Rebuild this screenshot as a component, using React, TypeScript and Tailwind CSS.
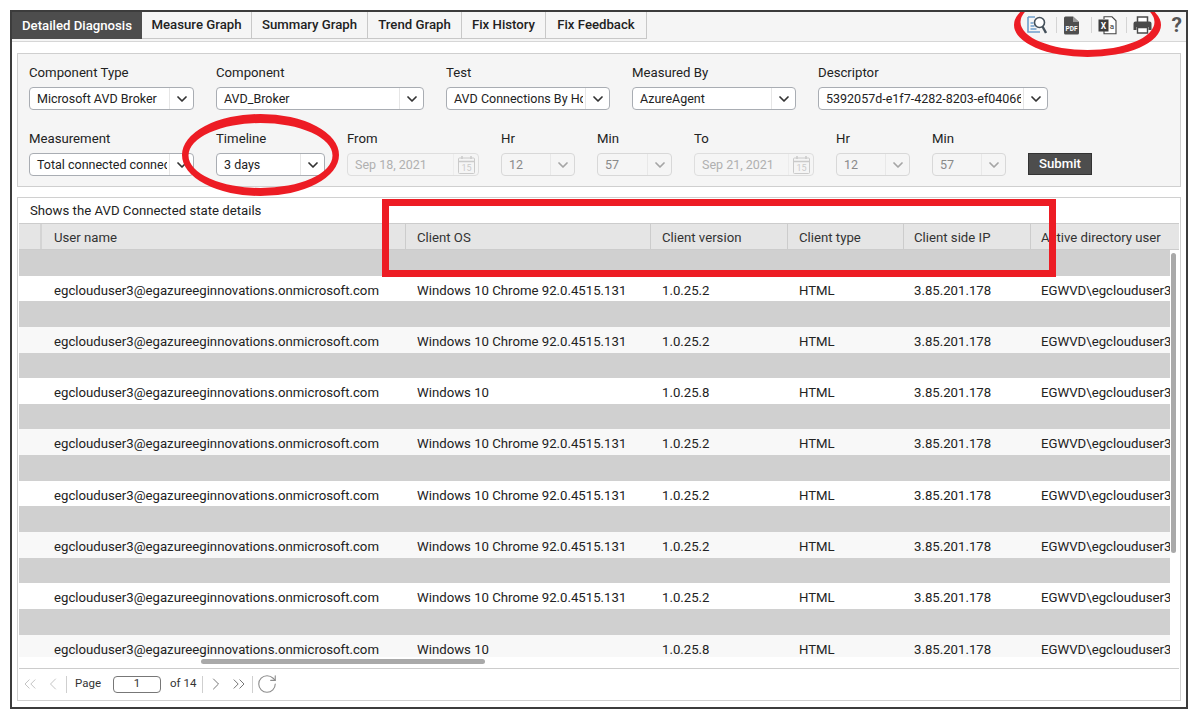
import { ChevronDown, ChevronLeft, ChevronRight, ChevronsLeft, ChevronsRight, RotateCw } from 'lucide-react';
import clsx from 'clsx';

const tabs = [
  { label: 'Measure Graph', width: 'w-[110px]' },
  { label: 'Summary Graph', width: 'w-[116px]' },
  { label: 'Trend Graph', width: 'w-[94px]' },
  { label: 'Fix History', width: 'w-[84px]' },
  { label: 'Fix Feedback', width: 'w-[101px]' },
];

const rows = [
  ['Windows 10 Chrome 92.0.4515.131', '1.0.25.2'],
  ['Windows 10 Chrome 92.0.4515.131', '1.0.25.2'],
  ['Windows 10', '1.0.25.8'],
  ['Windows 10 Chrome 92.0.4515.131', '1.0.25.2'],
  ['Windows 10 Chrome 92.0.4515.131', '1.0.25.2'],
  ['Windows 10 Chrome 92.0.4515.131', '1.0.25.2'],
  ['Windows 10 Chrome 92.0.4515.131', '1.0.25.2'],
  ['Windows 10', '1.0.25.8'],
];

const columns = 'grid grid-cols-[23px_363px_245px_137px_116px_127px_139px]';

function Select({ label, value, width, disabled }: { label: string; value: string; width: string; disabled?: boolean }) {
  return (
    <div className={clsx('shrink-0', width)}>
      <div className="h-4 text-[13.2px] leading-4 text-[#222]">{label}</div>
      <div
        className={clsx(
          'mt-1.5 flex h-[23px] items-center rounded-sm border',
          disabled ? 'border-[#d8d8d8] text-[#8a8a8a]' : 'border-[#a9adb3] bg-white text-[#222]'
        )}
      >
        <span className="mr-[2px] min-w-0 flex-1 overflow-hidden whitespace-nowrap pl-[7px] text-[12.5px] leading-5">{value}</span>
        <span className={clsx('flex h-full w-6 shrink-0 items-center justify-center border-l', disabled ? 'border-[#e8e8e8]' : 'border-[#e6e6e6]')}>
          <ChevronDown className={clsx('h-4 w-4', disabled ? 'text-[#a5a5a5]' : 'text-[#333]')} strokeWidth={2.6} />
        </span>
      </div>
    </div>
  );
}

function DateField({ label, value, width }: { label: string; value: string; width: string }) {
  return (
    <div className={clsx('shrink-0', width)}>
      <div className="h-4 text-[13.2px] leading-4 text-[#222]">{label}</div>
      <div className="mt-1.5 flex h-[23px] items-center rounded-sm border border-[#dedede]">
        <span className="flex-1 overflow-hidden whitespace-nowrap pl-[7px] text-[12.5px] leading-5 text-[#b0b0b0]">{value}</span>
        <span className="flex h-full w-[25px] shrink-0 items-center justify-center border-l border-[#ececec]">
          <svg width="19" height="20" viewBox="0 0 19 20" fill="none" stroke="#cacaca">
            <rect x="1.5" y="3" width="16" height="15.5" rx="1" />
            <path d="M1.5 6.5h16M5 1v3M14 1v3" strokeWidth="1.5" />
            <text x="9.5" y="16" textAnchor="middle" fontSize="9" fontFamily="Roboto, sans-serif" fill="#cacaca" stroke="none">15</text>
          </svg>
        </span>
      </div>
    </div>
  );
}

function ToolbarIcons() {
  return (
    <div className="flex items-center">
      <svg width="20" height="19" viewBox="0 0 20 19" fill="none" className="mr-[9px]">
        <path d="M1 1h7M1 1v15h12" stroke="#6f9fcb" strokeWidth="1.6" />
        <path d="M3.5 7h3M3.5 10h4M3.5 13h6" stroke="#6f9fcb" strokeWidth="1.4" />
        <circle cx="12.5" cy="6.5" r="5" stroke="#44505a" strokeWidth="1.6" fill="#fff" />
        <path d="M15.5 10.5l3.5 6.5" stroke="#44505a" strokeWidth="2.4" />
      </svg>
      <span className="mr-[6px] h-4 w-px bg-[#d4d4d4]" />
      <svg width="17" height="19" viewBox="0 0 17 19" className="mr-[11px]">
        <path d="M1 2a1.5 1.5 0 0 1 1.5-1.5H10L16 6v11a1.5 1.5 0 0 1-1.5 1.5h-12A1.5 1.5 0 0 1 1 17z" fill="#4f4f4f" />
        <path d="M10 .5V6h6" fill="#9a9a9a" />
        <text x="8.5" y="14.5" textAnchor="middle" fontSize="6.5" fontWeight="700" fontFamily="Roboto, sans-serif" fill="#fff">PDF</text>
      </svg>
      <span className="mr-[6px] h-4 w-px bg-[#d4d4d4]" />
      <svg width="19" height="19" viewBox="0 0 19 19" className="mr-[9px]">
        <path d="M6 3V.8h8l4 4v13H6V15" fill="#fff" stroke="#444" strokeWidth="1.1" />
        <rect x="0.5" y="3.5" width="10" height="12" fill="#3d3d3d" />
        <text x="5.5" y="12.5" textAnchor="middle" fontSize="8.5" fontWeight="700" fontFamily="Roboto, sans-serif" fill="#fff">X</text>
        <text x="14" y="13" textAnchor="middle" fontSize="8" fontFamily="Roboto, sans-serif" fill="#333">a</text>
      </svg>
      <span className="mr-[6px] h-4 w-px bg-[#d4d4d4]" />
      <svg width="19" height="18" viewBox="0 0 19 18" className="mr-[20px]">
        <path d="M4.5 6V1h10v5" fill="#fff" stroke="#4a4a4a" strokeWidth="1.5" />
        <path d="M2.5 5.5h14a2 2 0 0 1 2 2V14h-3v-3h-12v3H.5V7.5a2 2 0 0 1 2-2z" fill="#4a4a4a" />
        <path d="M4.5 11.5h10v5.5h-10z" fill="#fff" stroke="#4a4a4a" strokeWidth="1.4" />
      </svg>
      <span className="text-[21px] font-bold leading-5 text-[#555]">?</span>
    </div>
  );
}

export default function App() {
  return (
    <div className="h-[720px] w-[1200px] overflow-hidden bg-white pl-[10px] pt-[10px] font-['Roboto',sans-serif] text-[#222]">
      <div className="relative flex h-[699px] w-[1178px] flex-col overflow-hidden border-2 border-[#3c3c3c] bg-white">
        <div className="flex h-[30px] shrink-0 items-start justify-between border-b border-[#d6d6d6] bg-[#f5f5f5]">
          <div className="flex h-[27px]">
            <div className="flex w-[130px] items-center justify-center bg-[#4d4d4d] text-[13.2px] font-medium text-white">Detailed Diagnosis</div>
            {tabs.map((tab) => (
              <div key={tab.label} className={clsx('flex items-center justify-center border-r border-b border-[#c8c8c8] text-[13.2px] font-medium text-[#222]', tab.width)}>
                {tab.label}
              </div>
            ))}
          </div>
          <div className="pr-[4px] pt-[3px]">
            <ToolbarIcons />
          </div>
        </div>

        <div className="ml-[5px] mt-[11px] h-[134px] w-[1164px] shrink-0 border border-[#cfcfcf] bg-[#f5f5f5] pl-[11px] pt-[11px]">
          <div className="flex gap-[22px]">
            <Select label="Component Type" value="Microsoft AVD Broker" width="w-[165px]" />
            <Select label="Component" value="AVD_Broker" width="w-[208px]" />
            <Select label="Test" value="AVD Connections By Host" width="w-[164px]" />
            <Select label="Measured By" value="AzureAgent" width="w-[164px]" />
            <Select label="Descriptor" value="5392057d-e1f7-4282-8203-ef04066a1b2c" width="w-[230px]" />
          </div>
          <div className="mt-[21px] flex items-end gap-[22px]">
            <Select label="Measurement" value="Total connected connections" width="w-[165px]" />
            <Select label="Timeline" value="3 days" width="w-[109px]" />
            <DateField label="From" value="Sep 18, 2021" width="w-[132px]" />
            <Select label="Hr" value="12" width="w-[74px]" disabled />
            <Select label="Min" value="57" width="w-[75px]" disabled />
            <DateField label="To" value="Sep 21, 2021" width="w-[120px]" />
            <Select label="Hr" value="12" width="w-[74px]" disabled />
            <Select label="Min" value="57" width="w-[74px]" disabled />
            <button type="button" className="mb-px h-[22px] w-16 border border-[#333] bg-[#4d4d4d] pb-[2px] text-[13.2px] font-medium text-white">
              Submit
            </button>
          </div>
        </div>

        <div className="ml-[5px] mt-[10px] flex h-[504px] w-[1164px] shrink-0 flex-col border border-[#d0d0d0] p-px">
          <div className="flex h-[24px] shrink-0 items-center pb-[1px] pl-[11px] text-[13.2px] text-[#222]">Shows the AVD Connected state details</div>
          <div className={clsx(columns, 'h-[27px] shrink-0 border-y border-[#cccccc] bg-[#e5e5e5] text-[13.2px] text-[#333]')}>
            <div className="border-r-2 border-[#d4d4d4]" />
            <div className="flex items-center pl-3 pt-[2px]">User name</div>
            <div className="flex items-center border-l border-[#cccccc] pl-[11px] pt-[2px]">Client OS</div>
            <div className="flex items-center border-l border-[#cccccc] pl-[11px] pt-[2px]">Client version</div>
            <div className="flex items-center border-l border-[#cccccc] pl-[11px] pt-[2px]">Client type</div>
            <div className="flex items-center border-l border-[#cccccc] pl-[10px] pt-[2px]">Client side IP</div>
            <div className="flex items-center border-l border-[#cccccc] pl-[10px] pt-[2px] whitespace-nowrap">Active directory user</div>
          </div>
          <div className="relative h-[407px] shrink-0 overflow-hidden">
            <div className="h-full w-[1151px] overflow-hidden">
              {rows.map((row, i) => (
                <div key={i}>
                  <div className="h-[25.65px] bg-[#d0d0d0]" />
                  <div className={clsx(columns, 'h-[25.65px] items-center pt-[4px] text-[13.2px] text-[#222]', i % 2 === 0 ? 'bg-white' : 'bg-[#f8f8f8]')}>
                    <div />
                    <div className="pl-3 whitespace-nowrap">egclouduser3@egazureeginnovations.onmicrosoft.com</div>
                    <div className="pl-3 whitespace-nowrap">{row[0]}</div>
                    <div className="pl-3">{row[1]}</div>
                    <div className="pl-3">HTML</div>
                    <div className="pl-[11px]">3.85.201.178</div>
                    <div className="pl-[11px] whitespace-nowrap">EGWVD\egclouduser3</div>
                  </div>
                </div>
              ))}
            </div>
            {/* scrollbar thumb */}
            <div className="absolute right-[3px] top-[3px] h-[300px] w-[5px] rounded-full bg-[#a9a9a9]" />
          </div>
          <div className="relative h-[11px] shrink-0">
            <div className="absolute left-[182px] top-[2px] h-[5px] w-[284px] rounded-full bg-[#a9a9a9]" />
          </div>
          <div className="flex h-[31px] shrink-0 items-center border-t border-[#cccccc] text-[11.5px] text-[#333]">
            <ChevronsLeft className="ml-px h-5 w-5 text-[#c4c4c4]" strokeWidth={1.2} />
            <ChevronLeft className="ml-[3px] h-5 w-5 text-[#c4c4c4]" strokeWidth={1.2} />
            <span className="ml-[3px] h-[17px] w-px bg-[#cfcfcf]" />
            <span className="ml-[8px]">Page</span>
            <span className="ml-[12px] flex h-[17px] w-[48px] items-center justify-center rounded-sm border border-[#777]">1</span>
            <span className="ml-[9px]">of 14</span>
            <span className="ml-[6px] h-[17px] w-px bg-[#cfcfcf]" />
            <ChevronRight className="ml-[3px] h-5 w-5 text-[#777]" strokeWidth={1.2} />
            <ChevronsRight className="ml-[3px] h-5 w-5 text-[#777]" strokeWidth={1.2} />
            <span className="ml-[3px] h-[17px] w-px bg-[#cfcfcf]" />
            <RotateCw className="ml-[3px] h-[22px] w-[22px] text-[#8c8c8c]" strokeWidth={1.2} />
          </div>
        </div>

        {/* red hand-drawn annotations laid over the page */}
        <svg className="pointer-events-none absolute left-0 top-0" width="1174" height="695" viewBox="12 12 1174 695">
          <path
            fillRule="evenodd"
            fill="#ed1c24"
            d="M182 155a78.5 41 0 1 0 157 0a78.5 41 0 1 0 -157 0zM188.5 155.5a72 32.5 0 1 1 144 0a72 32.5 0 1 1 -144 0z"
          />
          <path
            fillRule="evenodd"
            fill="#ed1c24"
            d="M1014 25a73.5 32 0 1 0 147 0a73.5 32 0 1 0 -147 0zM1020.5 22a67 28 0 1 1 134 0a67 28 0 1 1 -134 0z"
          />
          <rect x="385.5" y="202.5" width="667" height="71" fill="none" stroke="#ed1c24" strokeWidth="7" />
        </svg>
      </div>
    </div>
  );
}
